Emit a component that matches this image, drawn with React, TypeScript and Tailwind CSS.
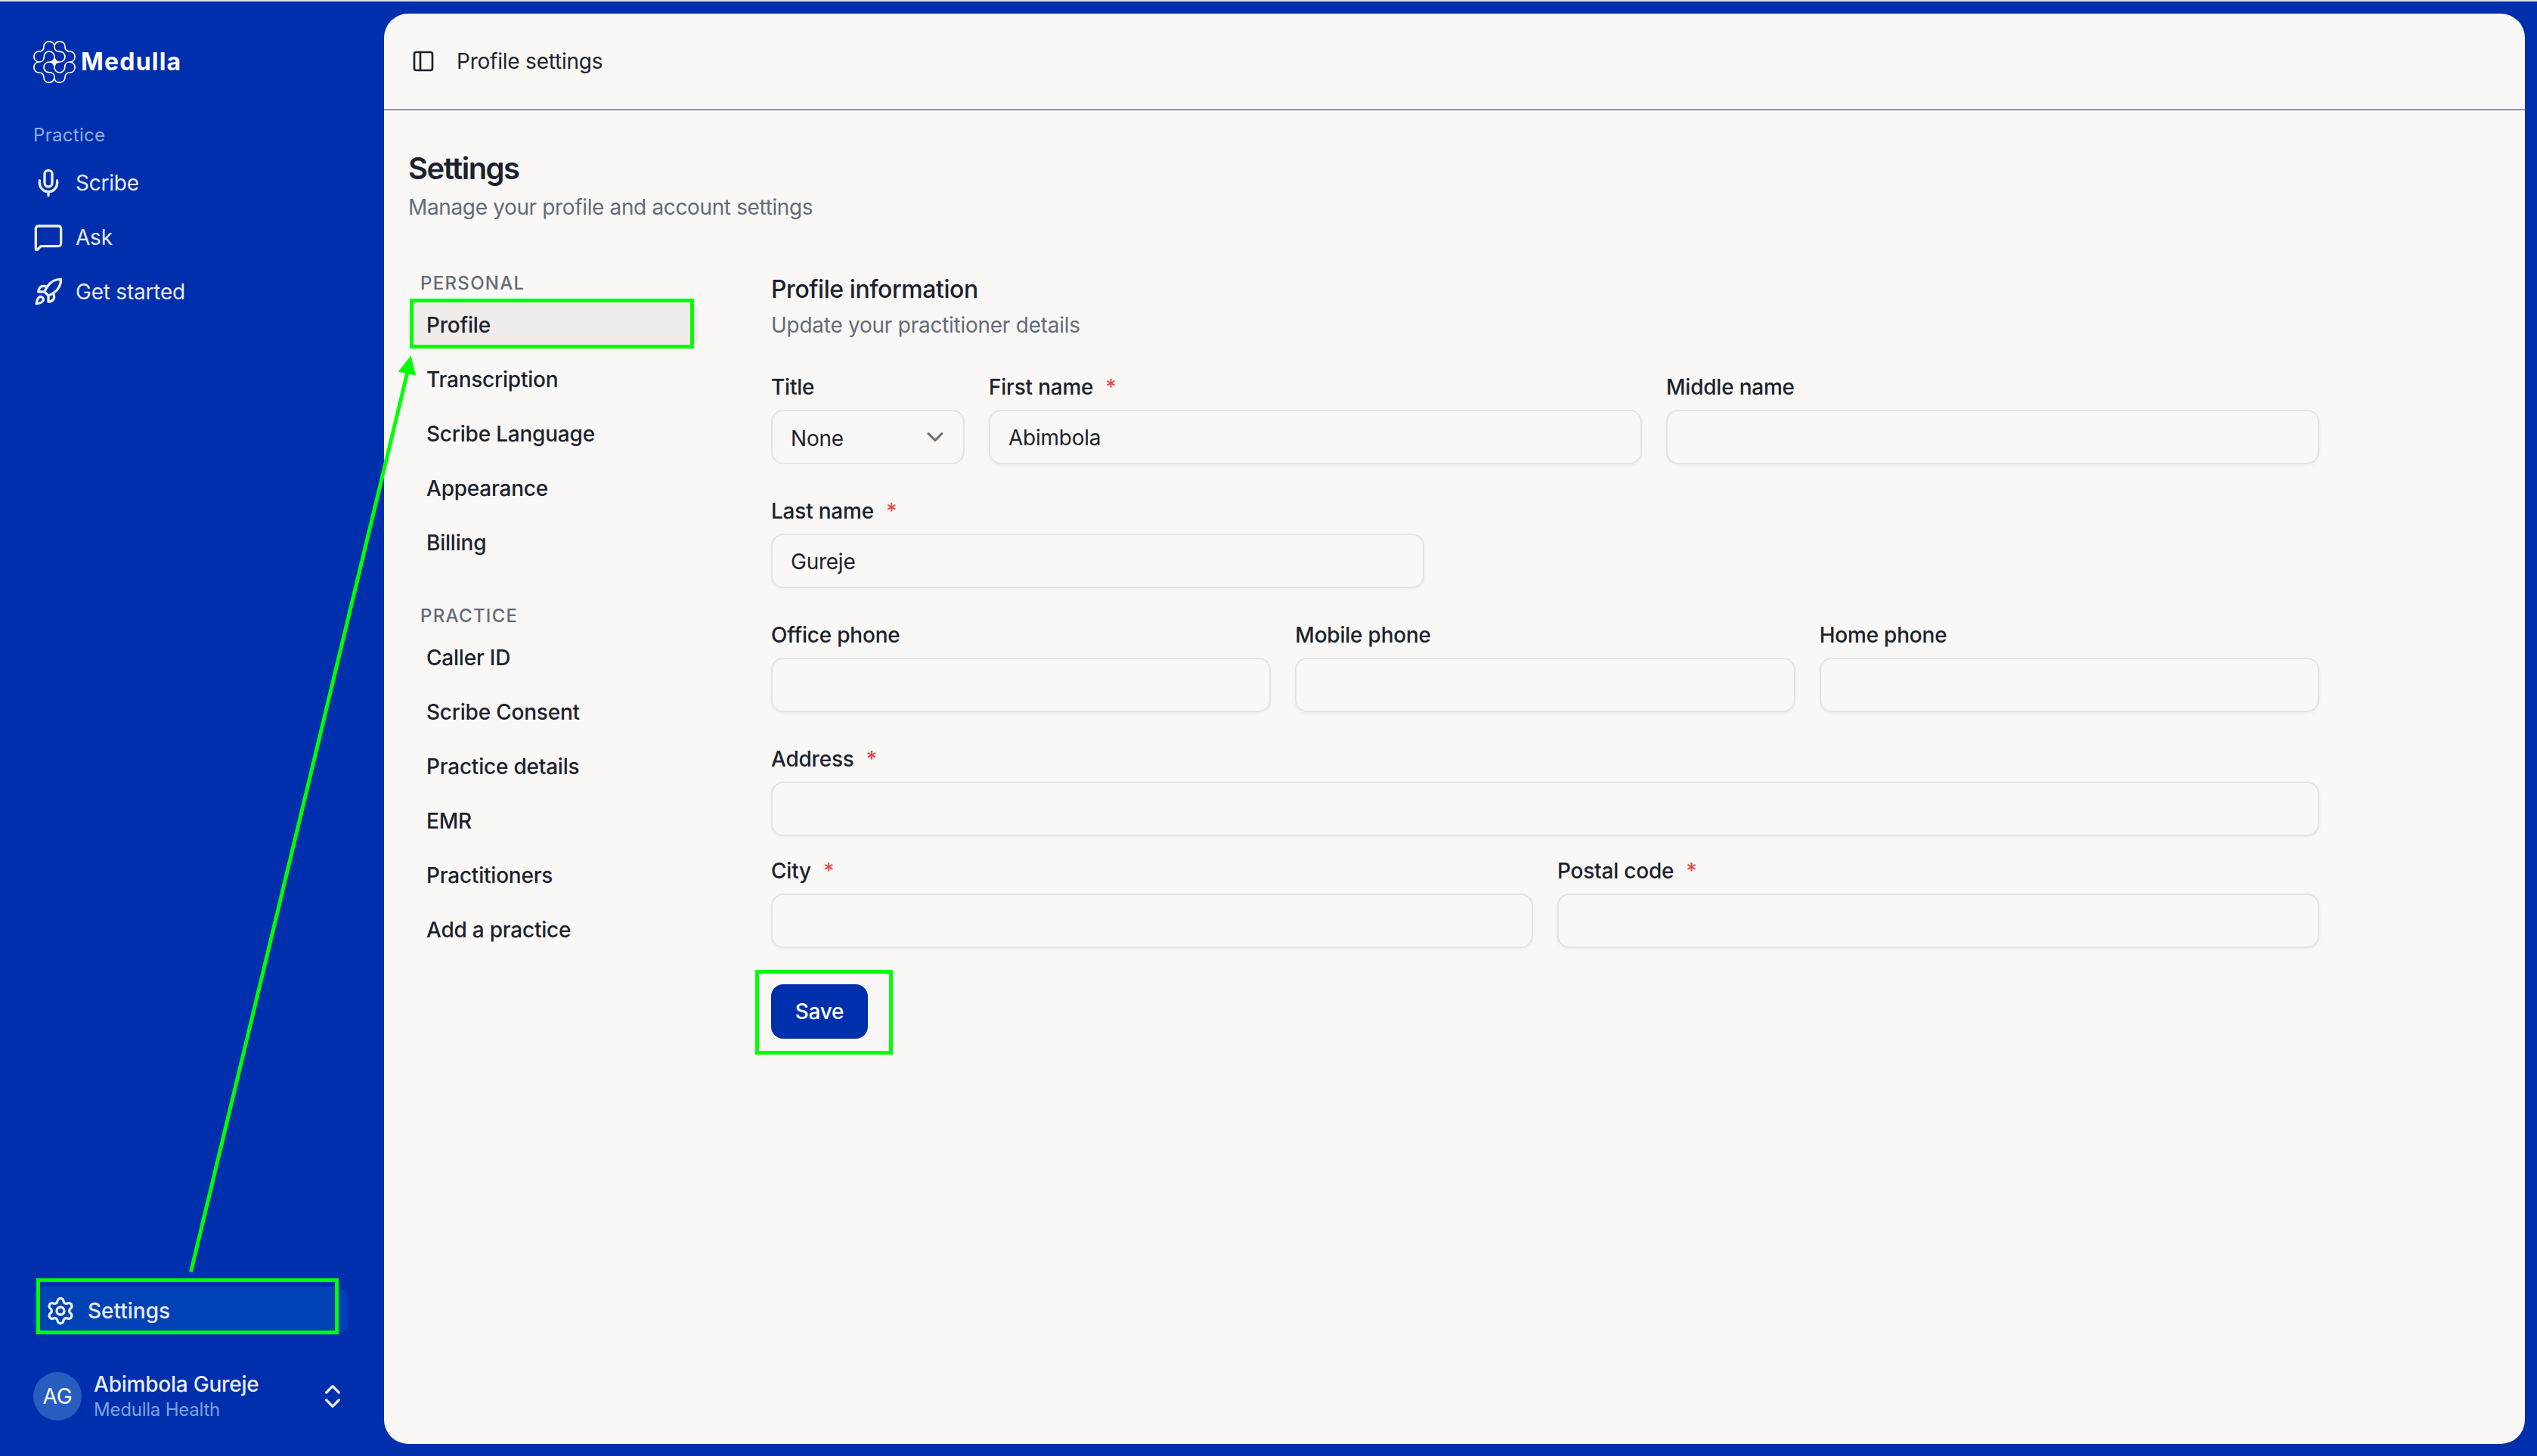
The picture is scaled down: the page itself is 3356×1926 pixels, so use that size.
import { useState } from "react";
import { ChevronDown, ChevronsUpDown, MessageSquare, Mic, PanelLeft, Rocket, Settings } from "lucide-react";

const personalItems = ["Profile", "Transcription", "Scribe Language", "Appearance", "Billing"];
const practiceItems = ["Caller ID", "Scribe Consent", "Practice details", "EMR", "Practitioners", "Add a practice"];

const mainNav = [
  { label: "Scribe", Icon: Mic },
  { label: "Ask", Icon: MessageSquare },
  { label: "Get started", Icon: Rocket },
];

function Logo() {
  return (
    <div className="flex items-center gap-[7px]">
      <svg className="size-14 shrink-0" viewBox="0 0 56 56" fill="none" stroke="white" strokeWidth="1.7">
        <path d="M28 7.5C28 3.5 25 .9 21 .9s-7 2.800-7 6.500c0 4.600-2 6.600-6.500 6.600C3.500 14 .9 17 .9 21S4 28 8 28c3.700 0 6.200-2.500 6.200-6.500 0-4.500 3-7.500 6.900-7.500S28 17 28 21v7" />
        <path d="M48.500 28c4 0 6.600-3 6.600-7s-2.800-7-6.500-7C44 14 42 12 42 7.500 42 3.500 39 .9 35 .9S28 4 28 8c0 3.700 2.500 6.200 6.500 6.200 4.500 0 7.500 3 7.500 6.900S39 28 35 28h-7" />
        <path d="M28 48.500c0 4 3 6.600 7 6.600s7-2.800 7-6.500C42 44 44 42 48.500 42c4 0 6.600-3 6.600-7S52 28 48 28c-3.700 0-6.200 2.500-6.200 6.500 0 4.500-3 7.500-6.900 7.500S28 39 28 35v-7" />
        <path d="M7.500 28C3.500 28 .9 31 .9 35s2.800 7 6.500 7C12 42 14 44 14 48.500c0 4 3 6.600 7 6.600S28 52 28 48c0-3.700-2.500-6.200-6.500-6.200-4.500 0-7.500-3-7.500-6.900S17 28 21 28h7" />
        <path d="M28 22c.8 4 2 5.200 6 6-4 .8-5.200 2-6 6-.8-4-2-5.200-6-6 4-.8 5.200-2 6-6Z" fill="white" />
      </svg>
      <span className="text-[32px] leading-none font-bold tracking-[1.2px] text-white">Medulla</span>
    </div>
  );
}

function Sidebar() {
  return (
    <aside className="w-[508px] shrink-0 flex flex-col px-11 text-[#e8edf6]">
      <div className="pt-[52px]">
        <Logo />
      </div>
      <p className="mt-[53px] text-2xl leading-8 tracking-[0.3px] text-[#8eaee0]">Practice</p>
      <nav className="mt-[11px]">
        {mainNav.map(({ label, Icon }) => (
          <a key={label} className="flex items-center gap-4 h-[72px] text-[28px]">
            <Icon className="size-10" />
            {label}
          </a>
        ))}
      </nav>

      <a className="mt-auto flex items-center gap-4 h-16 w-[416px] px-4 rounded-2xl bg-[#0042b6] text-[28px] font-medium tracking-normal">
        <Settings className="size-10" />
        Settings
      </a>
      <div className="mt-[46px] mb-[45px] flex items-center w-[416px]">
        <div className="size-16 rounded-full bg-[#285dc0] text-white text-[28px] flex items-center justify-center">
          AG
        </div>
        <div className="ml-4 pt-px flex-1">
          <p className="text-[28px] leading-9 font-medium">Abimbola Gureje</p>
          <p className="text-2xl leading-8 text-[#7fa3dc]">Medulla Health</p>
        </div>
        <ChevronsUpDown className="size-10" />
      </div>
    </aside>
  );
}

function NavGroup({
  label,
  items,
  active,
  onSelect,
}: {
  label: string;
  items: string[];
  active: string;
  onSelect: (item: string) => void;
}) {
  return (
    <div>
      <h3 className="px-4 pt-px mb-[7px] text-2xl leading-8 font-medium tracking-[1.3px] text-[#636b78]">{label}</h3>
      <div className="space-y-2">
        {items.map((item) => (
          <button
            key={item}
            onClick={() => onSelect(item)}
            className={`block w-full h-16 px-6 rounded-2xl text-left text-[28px] font-medium ${
              item === active ? "bg-[#f0ece9]" : ""
            }`}
          >
            {item}
          </button>
        ))}
      </div>
    </div>
  );
}

function Field({
  label,
  required,
  defaultValue,
  className = "",
}: {
  label: string;
  required?: boolean;
  defaultValue?: string;
  className?: string;
}) {
  return (
    <div className={className}>
      <label className="block text-[28px] leading-7 font-medium">
        {label}
        {required && <span className="ml-4 text-[#ef4444]">*</span>}
      </label>
      <input
        defaultValue={defaultValue}
        className="mt-4 block w-full h-[72px] px-6 pt-0.5 rounded-2xl border-2 border-[#e4e3e1] shadow-[0_2px_4px_rgba(0,0,0,0.05)] text-[28px] tracking-[-0.25px] outline-none"
      />
    </div>
  );
}

function ProfileForm() {
  return (
    <section className="w-[2048px] pt-[9px]">
      <h2 className="text-[32px] leading-8 font-medium tracking-[-0.44px]">Profile information</h2>
      <p className="mt-[11px] text-[28px] leading-10 tracking-[-0.26px] text-[#636b78]">
        Update your practitioner details
      </p>

      <div className="mt-12 space-y-12">
        <div className="flex gap-8">
          <div className="w-64">
            <label className="block text-[28px] leading-7 font-medium">Title</label>
            <button className="mt-4 flex w-full h-[72px] items-center justify-between pl-6 pr-[19px] rounded-2xl border-2 border-[#e4e3e1] text-[28px]">
              <span className="pt-[3px]">None</span>
              <ChevronDown className="size-9 text-[#636b78]" />
            </button>
          </div>
          <Field label="First name" required defaultValue="Abimbola" className="flex-1" />
          <Field label="Middle name" className="flex-1" />
        </div>
        <Field label="Last name" required defaultValue="Gureje" className="w-[864px]" />
        <div className="grid grid-cols-3 gap-8">
          <Field label="Office phone" />
          <Field label="Mobile phone" />
          <Field label="Home phone" />
        </div>
        <div className="space-y-8">
          <Field label="Address" required />
          <div className="grid grid-cols-2 gap-8">
            <Field label="City" required />
            <Field label="Postal code" required />
          </div>
        </div>
        <button className="block w-32 h-[72px] rounded-2xl bg-[#002fad] text-white text-[28px] font-medium">Save</button>
      </div>
    </section>
  );
}

// Walkthrough highlights drawn over the page
function Annotations() {
  return (
    <svg
      className="absolute left-0 -top-0.5 pointer-events-none"
      width="3356"
      height="1926"
      fill="none"
      stroke="#00ff00"
      strokeWidth="5"
    >
      <rect x="544.5" y="397.5" width="371" height="61" />
      <rect x="1001.5" y="1285.5" width="177" height="107" />
      <rect x="50.5" y="1693.5" width="395" height="69" />
      <path d="M252.5 1682.5 539 492" />
      <path d="M543.7 470.3 526.7 491.7 550 496.7Z" fill="#00ff00" stroke="none" />
    </svg>
  );
}

export default function App() {
  const [active, setActive] = useState("Profile");

  return (
    <div className="relative flex w-[3356px] h-[1926px] overflow-hidden border-t-2 border-[#dcdfe3] bg-[#002fad] font-['Inter',sans-serif] tracking-[-0.22px] text-[#1b222c]">
      <Sidebar />
      <main className="flex-1 mt-4 mr-4 mb-4 rounded-[32px] bg-[#faf8f6] overflow-hidden">
        <header className="h-32 px-9 flex items-center gap-7 border-b-2 border-[#6f9bd1] text-[28px]">
          <PanelLeft className="size-8" />
          Profile settings
        </header>
        <div className="px-8 pt-[53px]">
          <h1 className="text-[40px] leading-12 font-semibold tracking-[-1.5px]">Settings</h1>
          <p className="mt-[7px] text-[28px] leading-10 tracking-[-0.36px] text-[#636b78]">
            Manage your profile and account settings
          </p>
          <div className="mt-16 flex gap-24">
            <nav className="w-96 space-y-12">
              <NavGroup label="PERSONAL" items={personalItems} active={active} onSelect={setActive} />
              <NavGroup label="PRACTICE" items={practiceItems} active={active} onSelect={setActive} />
            </nav>
            <ProfileForm />
          </div>
        </div>
      </main>
      <Annotations />
    </div>
  );
}
